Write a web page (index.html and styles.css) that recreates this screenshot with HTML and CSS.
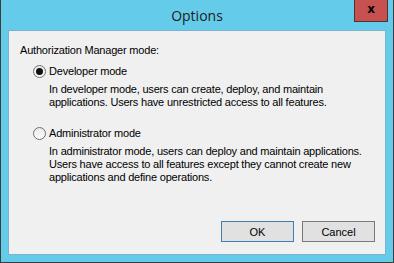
FILE: index.html
```html
<!DOCTYPE html>
<html lang="en">
<head>
<meta charset="UTF-8">
<title>Options</title>
<link rel="stylesheet" href="styles.css">
</head>
<body>
<div class="window">
  <div class="titlebar">
    <div class="title">Options</div>
    <div class="close">x</div>
  </div>
  <div class="client">
    <div class="label">Authorization Manager mode:</div>

    <div class="option">
      <div class="choice"><span class="radio checked"></span>Developer mode</div>
      <div class="desc">In developer mode, users can create, deploy, and maintain<br>applications. Users have unrestricted access to all features.</div>
    </div>

    <div class="option">
      <div class="choice"><span class="radio"></span>Administrator mode</div>
      <div class="desc">In administrator mode, users can deploy and maintain applications.<br>Users have access to all features except they cannot create new<br>applications and define operations.</div>
    </div>

    <div class="buttons">
      <button class="default">OK</button>
      <button>Cancel</button>
    </div>
  </div>
</div>
</body>
</html>
```

FILE: styles.css
```css
html, body {
  margin: 0;
  padding: 0;
}
body {
  width: 394px;
  height: 263px;
  overflow: hidden;
  font-family: "Liberation Sans", Arial, sans-serif;
  font-size: 11px;
  letter-spacing: -0.2px;
  color: #000;
}
.window {
  box-sizing: border-box;
  width: 394px;
  height: 263px;
  background: #65cbea;
  border: 1px solid #3d3d3d;
  border-top: none;
  display: flex;
  flex-direction: column;
  padding: 0 7px 7px 7px;
}
.titlebar {
  height: 30px;
  display: flex;
  justify-content: center;
  position: relative;
  flex-shrink: 0;
}
.title {
  font-family: "Open Sans", "Noto Sans", sans-serif;
  font-size: 14px;
  letter-spacing: 0;
  color: #1c1c1c;
  padding-top: 6px;
}
.close {
  position: absolute;
  right: -2px;
  top: 0;
  box-sizing: border-box;
  width: 34px;
  height: 22px;
  background: #c75050;
  border: 1px solid #4e3232;
  border-top: none;
  font-family: "DejaVu Sans", sans-serif;
  font-weight: bold;
  font-size: 12px;
  letter-spacing: 0;
  line-height: 18px;
  text-align: center;
  color: #000;
}
.client {
  flex: 1;
  background: #f0f0f0;
  border: 1px solid #7fb0cc;
  display: flex;
  flex-direction: column;
  padding: 12px 0 0 11px;
}
.label {
  line-height: 14px;
}
.option {
  margin-top: 7px;
  padding-left: 13px;
}
.option + .option {
  margin-top: 17px;
}
.choice {
  display: flex;
  align-items: center;
  line-height: 14px;
}
.radio {
  box-sizing: border-box;
  width: 13px;
  height: 13px;
  border-radius: 50%;
  border: 1px solid #707070;
  background: linear-gradient(#eaeaea, #fcfcfc);
  margin-right: 3px;
  display: flex;
  align-items: center;
  justify-content: center;
}
.radio.checked::after {
  content: "";
  width: 7px;
  height: 7px;
  border-radius: 50%;
  background: #111;
}
.desc {
  margin-top: 5px;
  padding-left: 16px;
  line-height: 13px;
}
.buttons {
  margin-top: auto;
  display: flex;
  justify-content: flex-end;
  gap: 8px;
  padding: 0 10px 12px 0;
}
button {
  box-sizing: border-box;
  width: 73px;
  height: 21px;
  font-family: "Liberation Sans", Arial, sans-serif;
  font-size: 11px;
  color: #000;
  background: #e1e1e1;
  border: 1px solid #7a7a7a;
  padding: 0;
}
button.default {
  border-color: #3c7fb1;
}
```
